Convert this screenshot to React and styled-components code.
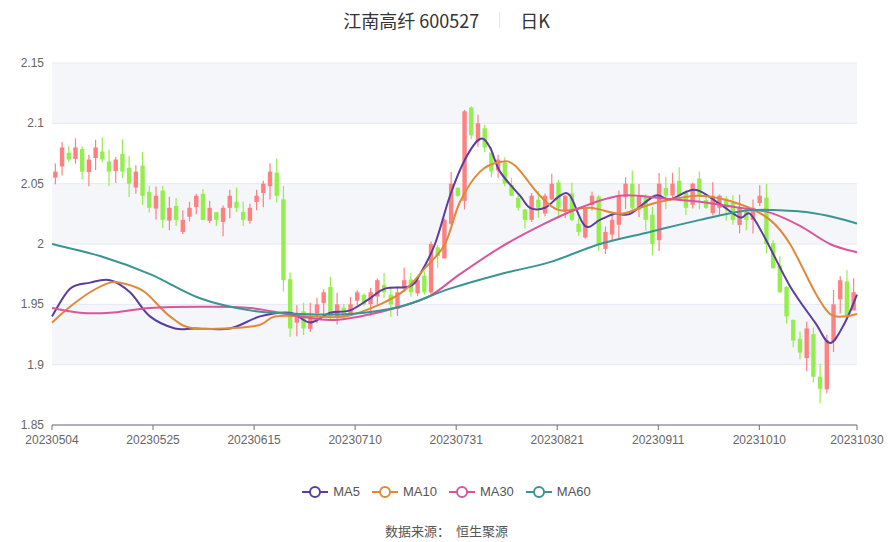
import React from 'react';
import styled, { createGlobalStyle } from 'styled-components';

const GlobalStyle = createGlobalStyle`
  html, body { margin: 0; padding: 0; background: #fff; }
  body { font-family: "Noto Sans CJK SC", "Noto Sans", sans-serif; }
`;

const Page = styled.div`
  width: 893px;
  height: 542px;
  display: flex;
  flex-direction: column;
  align-items: center;
  overflow: hidden;
`;

const Title = styled.div`
  height: 40px;
  display: flex;
  align-items: center;
  gap: 14px;
  font-size: 18px;
  color: #333;
`;

const Divider = styled.span`
  width: 1px;
  height: 16px;
  background: #e6e6e6;
  margin: 0 6px;
`;

const ChartSvg = styled.svg`
  display: block;
  flex: none;
`;

const Legend = styled.div`
  display: flex;
  gap: 12px;
  margin-top: 24px;
  font-size: 13px;
  color: #555;
  font-family: "Liberation Sans", "Noto Sans CJK SC", sans-serif;
`;

const LegendItem = styled.div`
  display: flex;
  align-items: center;
  gap: 5px;
`;

const Source = styled.div`
  margin-top: 22px;
  font-size: 13px;
  color: #555;
`;

const closes = [
  2.06, 2.08, 2.07, 2.08, 2.06, 2.07, 2.08, 2.07, 2.06, 2.07, 2.06, 2.05, 2.06,
  2.04, 2.03, 2.04,
  2.02, 2.03, 2.02, 2.02, 2.03, 2.04, 2.02, 2.03, 2.02, 2.03, 2.04, 2.03, 2.02, 2.03, 2.04,
  2.05, 2.06, 2.04,
  1.97, 1.93, 1.94, 1.93, 1.94,
  1.95, 1.96, 1.94, 1.95, 1.94, 1.95, 1.96, 1.95, 1.96, 1.97, 1.96, 1.95,
  1.96, 1.97, 1.96, 1.97, 1.96,
  2.0, 1.99, 2.02, 2.05, 2.04,
  2.11, 2.09, 2.1, 2.08,
  2.06, 2.07, 2.05, 2.04, 2.03, 2.02, 2.04, 2.03,
  2.04, 2.05, 2.03, 2.04, 2.02, 2.01, 2.03, 2.04,
  2.0, 2.01, 2.02, 2.04,
  2.05, 2.03, 2.04, 2.02, 2.0, 2.05,
  2.04, 2.05, 2.04, 2.03, 2.05, 2.04, 2.03, 2.04, 2.04, 2.03, 2.02, 2.03, 2.02, 2.03, 2.04,
  2.0, 1.98, 1.96, 1.94, 1.92,
  1.91, 1.93, 1.89, 1.88, 1.92,
  1.95, 1.97, 1.94, 1.96,
];

const N = closes.length;
const X0 = 52, X1 = 857, Y0 = 63, Y1 = 425;
const step = (X1 - X0) / N;
const xi = (i) => X0 + (i + 0.5) * step;
const yv = (v) => Y0 + ((2.15 - v) / 0.3) * (Y1 - Y0);

function rnd(i) {
  const s = Math.sin(i * 12.9898) * 43758.5453;
  return s - Math.floor(s);
}

const candles = closes.map((c, i) => {
  const prev = i === 0 ? 2.06 : closes[i - 1];
  let open = prev + (rnd(i) - 0.5) * 0.01;
  if (Math.abs(open - c) < 0.002) open = c + (rnd(i + 7) > 0.5 ? 0.01 : -0.01);
  const hi = Math.max(open, c) + rnd(i + 3) * 0.012;
  const lo = Math.min(open, c) - rnd(i + 5) * 0.012;
  return { open, close: c, hi, lo, up: c >= open };
});

// moving averages as read from the chart: [x px, value]
const lines = [
  {
    name: 'MA5', color: '#5b3d9e', pts: [
      [52, 1.94], [70, 1.963], [90, 1.968], [110, 1.97], [130, 1.96], [150, 1.94], [175, 1.93], [195, 1.93],
      [230, 1.93], [260, 1.94], [290, 1.943], [310, 1.935], [330, 1.943], [350, 1.945], [370, 1.955],
      [385, 1.963], [410, 1.965], [420, 1.975], [435, 2.0], [450, 2.04], [465, 2.07], [480, 2.087],
      [490, 2.08], [500, 2.06], [520, 2.04], [530, 2.03], [545, 2.03], [560, 2.04], [570, 2.04],
      [585, 2.015], [600, 2.02], [615, 2.025], [630, 2.025], [655, 2.04], [670, 2.037], [695, 2.045],
      [720, 2.033], [740, 2.022], [750, 2.025], [765, 2.005], [790, 1.965], [815, 1.935], [830, 1.918],
      [845, 1.935], [857, 1.958],
    ],
  },
  {
    name: 'MA10', color: '#e0893a', pts: [
      [52, 1.935], [70, 1.948], [90, 1.96], [110, 1.968], [125, 1.967], [145, 1.96], [170, 1.94],
      [195, 1.93], [255, 1.932], [275, 1.94], [310, 1.94], [345, 1.94], [380, 1.95], [405, 1.962],
      [425, 1.98], [445, 2.0], [460, 2.035], [480, 2.06], [500, 2.068], [515, 2.065], [540, 2.04],
      [560, 2.028], [590, 2.03], [620, 2.025], [640, 2.03], [660, 2.035], [700, 2.04], [740, 2.033],
      [770, 2.02], [790, 2.0], [815, 1.96], [830, 1.942], [845, 1.94], [857, 1.942],
    ],
  },
  {
    name: 'MA30', color: '#d9559d', pts: [
      [52, 1.947], [80, 1.943], [110, 1.943], [150, 1.947], [200, 1.948], [250, 1.947], [300, 1.94],
      [330, 1.937], [360, 1.94], [400, 1.948], [430, 1.957], [460, 1.975], [500, 1.997], [540, 2.015],
      [580, 2.03], [620, 2.04], [660, 2.038], [700, 2.035], [740, 2.03], [770, 2.026], [800, 2.015],
      [830, 2.0], [857, 1.993],
    ],
  },
  {
    name: 'MA60', color: '#3b9494', pts: [
      [52, 2.0], [100, 1.99], [150, 1.975], [200, 1.955], [250, 1.945], [300, 1.942], [350, 1.942],
      [400, 1.948], [450, 1.963], [500, 1.975], [550, 1.985], [600, 2.0], [650, 2.01], [700, 2.02],
      [750, 2.028], [800, 2.027], [830, 2.023], [857, 2.017],
    ],
  },
];

function smoothPath(raw) {
  const pts = raw.map(([x, v]) => [x, yv(v)]);
  let d = `M${pts[0][0]},${pts[0][1]}`;
  for (let i = 0; i < pts.length - 1; i++) {
    const p0 = pts[i - 1] || pts[i];
    const p1 = pts[i];
    const p2 = pts[i + 1];
    const p3 = pts[i + 2] || p2;
    const c1 = [p1[0] + (p2[0] - p0[0]) / 6, p1[1] + (p2[1] - p0[1]) / 6];
    const c2 = [p2[0] - (p3[0] - p1[0]) / 6, p2[1] - (p3[1] - p1[1]) / 6];
    d += ` C${c1[0]},${c1[1]} ${c2[0]},${c2[1]} ${p2[0]},${p2[1]}`;
  }
  return d;
}

const yTicks = [2.15, 2.1, 2.05, 2, 1.95, 1.9, 1.85];
const xLabels = ['20230504', '20230525', '20230615', '20230710', '20230731', '20230821', '20230911', '20231010', '20231030'];

function LegendIcon({ color }) {
  return (
    <svg width="26" height="14">
      <line x1="0" y1="7" x2="26" y2="7" stroke={color} strokeWidth="2" />
      <circle cx="13" cy="7" r="5" fill="#fff" stroke={color} strokeWidth="2" />
    </svg>
  );
}

function Chart() {
  return (
    <ChartSvg width="893" height="420" viewBox="0 40 893 420">
      {yTicks.slice(0, -1).map((t, i) =>
        i % 2 === 0 ? (
          <rect key={t} x={X0} y={yv(t)} width={X1 - X0} height={yv(t - 0.05) - yv(t)} fill="#f5f6fa" />
        ) : null
      )}
      {yTicks.map((t) => (
        <g key={t}>
          <line x1={X0} x2={X1} y1={yv(t)} y2={yv(t)} stroke="#e6e9f2" />
          <text x={X0 - 8} y={yv(t) + 4} textAnchor="end" fontSize="12" fill="#666" fontFamily="Liberation Sans, sans-serif">
            {t}
          </text>
        </g>
      ))}
      <line x1={X0} x2={X1} y1={Y1} y2={Y1} stroke="#6e7079" />
      {xLabels.map((l, i) => {
        const x = i === 8 ? X1 : X0 + i * 15 * ((X1 - X0) / 119.5);
        return (
          <g key={l}>
            <line x1={x} x2={x} y1={Y1} y2={Y1 + 5} stroke="#6e7079" />
            <text x={x} y={Y1 + 19} textAnchor="middle" fontSize="12" fill="#666" fontFamily="Liberation Sans, sans-serif">
              {l}
            </text>
          </g>
        );
      })}
      {candles.map((c, i) => {
        const color = c.up ? '#ff8080' : '#94ee4e';
        const top = yv(Math.max(c.open, c.close));
        const bot = yv(Math.min(c.open, c.close));
        return (
          <g key={i}>
            <line x1={xi(i)} x2={xi(i)} y1={yv(c.hi)} y2={yv(c.lo)} stroke={color} strokeWidth="1.2" />
            <rect x={xi(i) - 2.2} y={top} width="4.4" height={Math.max(1, bot - top)} fill={color} />
          </g>
        );
      })}
      {lines.map((l) => (
        <path key={l.name} d={smoothPath(l.pts)} fill="none" stroke={l.color} strokeWidth="2" />
      ))}
    </ChartSvg>
  );
}

export default function App() {
  return (
    <Page>
      <GlobalStyle />
      <Title>
        <span>江南高纤 600527</span>
        <Divider />
        <span>日K</span>
      </Title>
      <Chart />
      <Legend>
        {lines.map((l) => (
          <LegendItem key={l.name}>
            <LegendIcon color={l.color} />
            {l.name}
          </LegendItem>
        ))}
      </Legend>
      <Source>数据来源：&nbsp;&nbsp;恒生聚源</Source>
    </Page>
  );
}
